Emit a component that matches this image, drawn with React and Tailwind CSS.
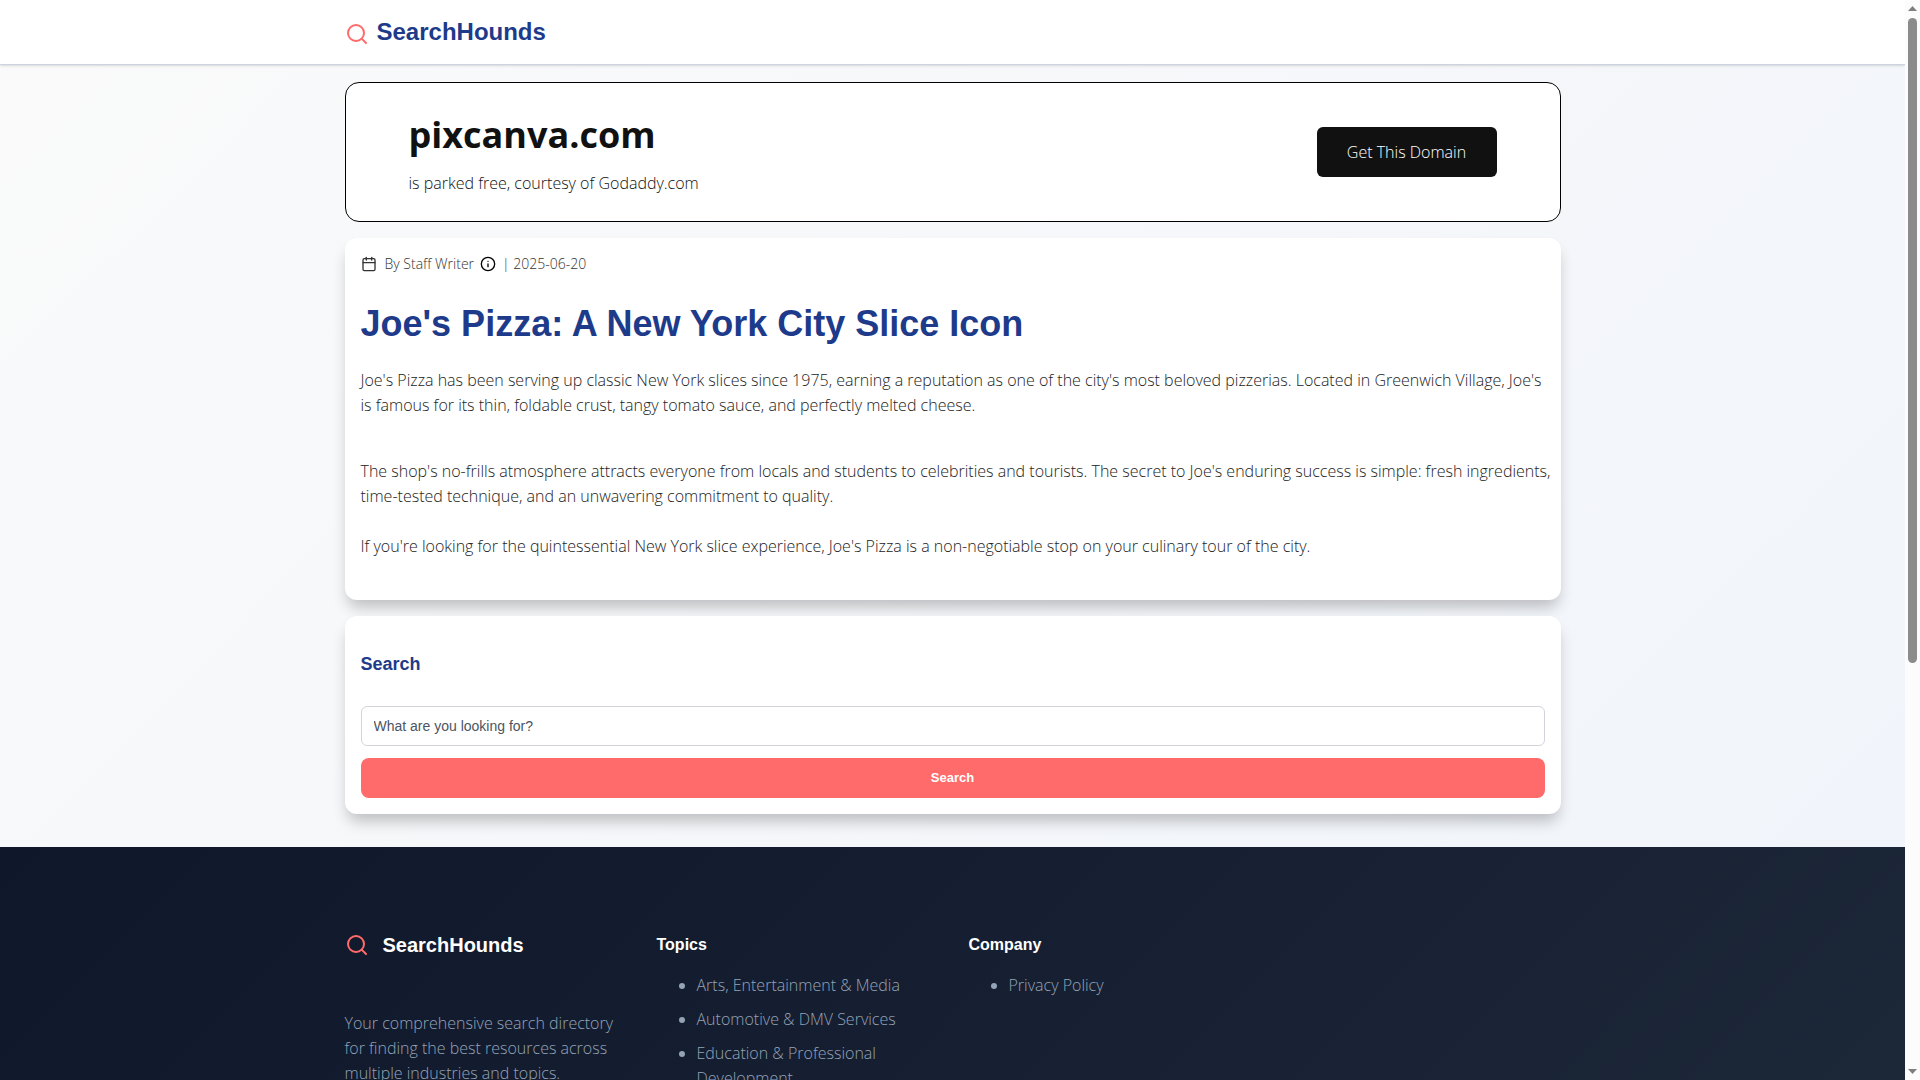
import React from 'react';
import { Calendar, Info, Search } from 'lucide-react';

const topics = [
  'Arts, Entertainment & Media',
  'Automotive & DMV Services',
  'Education & Professional Development',
];

const company = ['Privacy Policy'];

const Header = () => (
  <header className="shrink-0 border-b border-[#cdd3e0] bg-white shadow-sm">
    <div className="mx-auto flex h-16 max-w-[1248px] items-center px-4">
      <a href="#" className="flex items-center gap-2 font-['Liberation_Sans',sans-serif] text-2xl font-bold text-[#1e3a8a]">
        <Search className="mt-1 size-6 text-[#ff6b6b]" strokeWidth={2} />
        SearchHounds
      </a>
    </div>
  </header>
);

const DomainBanner = () => (
  <section className="flex h-[140px] items-center justify-between rounded-[14px] border border-black bg-white px-[63px]">
    <div className="pt-0.5">
      <h2 className="text-4xl leading-[48px] font-bold text-[#111]">pixcanva.com</h2>
      <p className="mt-3 leading-6 text-[#111]">is parked free, courtesy of Godaddy.com</p>
    </div>
    <button type="button" className="h-[50px] w-[180px] rounded-md bg-[#111] text-white">
      Get This Domain
    </button>
  </section>
);

const Article = () => (
  <article className="rounded-xl bg-white p-4 shadow-[0_10px_15px_-3px_rgba(0,0,0,0.24)]">
    <div className="flex h-5 items-center text-sm text-[#333]">
      <Calendar className="mr-2 size-4" strokeWidth={2} />
      <span>By Staff Writer</span>
      <Info className="mx-1.5 size-4 text-black" strokeWidth={2} />
      <span>| 2025-06-20</span>
    </div>
    <h1 className="mt-7 font-['Liberation_Sans',sans-serif] text-4xl leading-[44px] font-bold text-[#1e3a8a]">
      Joe's Pizza: A New York City Slice Icon
    </h1>
    <p className="mt-[22px] leading-[25px]">
      Joe's Pizza has been serving up classic New York slices since 1975, earning a reputation as one of the city's most beloved pizzerias. Located in Greenwich Village, Joe's is famous for its thin, foldable crust, tangy tomato sauce, and perfectly melted cheese.
    </p>
    <p className="-mr-3 mt-[41px] leading-[25px]">
      The shop's no-frills atmosphere attracts everyone from locals and students to celebrities and tourists. The secret to Joe's enduring success is simple: fresh ingredients, time-tested technique, and an unwavering commitment to quality.
    </p>
    <p className="mt-[25px] mb-[25px] leading-[25px]">
      If you're looking for the quintessential New York slice experience, Joe's Pizza is a non-negotiable stop on your culinary tour of the city.
    </p>
  </article>
);

const SearchBox = () => (
  <section className="rounded-xl bg-white p-4 font-['Liberation_Sans',sans-serif] shadow-[0_10px_15px_-3px_rgba(0,0,0,0.24)]">
    <h3 className="mt-4 text-lg leading-8 font-bold text-[#1e3a8a]">Search</h3>
    <form className="mt-[26px] flex flex-col gap-3" onSubmit={(e) => e.preventDefault()}>
      <input
        type="text"
        aria-label="Search"
        placeholder="What are you looking for?"
        className="h-10 rounded-md border border-[#d1d5db] px-3 text-sm font-normal placeholder:text-[#4b5563]"
      />
      <button type="submit" className="h-10 rounded-lg bg-[#ff6b6b] text-[13px] font-bold text-white">
        Search
      </button>
    </form>
  </section>
);

const FooterColumn = ({ title, items }) => (
  <div>
    <h4 className="font-['Liberation_Sans',sans-serif] font-bold text-white">{title}</h4>
    <ul className="mt-4 list-disc space-y-[9px] pl-10 leading-[25px]">
      {items.map((item) => (
        <li key={item}>
          <a href="#">{item}</a>
        </li>
      ))}
    </ul>
  </div>
);

const Footer = () => (
  <footer className="flex-1 bg-linear-135 from-[#0f172a] to-[#1c2738] text-[#94a3b8]">
    <div className="mx-auto grid max-w-[1248px] grid-cols-4 gap-8 px-4 pt-[86px]">
      <div>
        <a href="#" className="flex h-6 items-center gap-3.5 font-['Liberation_Sans',sans-serif] text-xl font-bold text-white">
          <Search className="size-6 text-[#ff6b6b]" strokeWidth={2} />
          SearchHounds
        </a>
        <p className="mt-[54px] leading-[25px]">
          Your comprehensive search directory for finding the best resources across multiple industries and topics.
        </p>
      </div>
      <FooterColumn title="Topics" items={topics} />
      <FooterColumn title="Company" items={company} />
    </div>
  </footer>
);

const ScrollBar = () => (
  <div className="flex w-[15px] shrink-0 flex-col items-center bg-[#fcfcfc] py-[6px]" aria-hidden="true">
    <svg className="h-[5px] w-[9px] shrink-0" viewBox="0 0 9 5" fill="#7f7f7f">
      <path d="M0 5 4.500 0 9 5z" />
    </svg>
    <div className="mt-[7px] mb-[7px] flex-1">
      <div className="h-[61.8%] w-[9px] rounded-full bg-[#8b8b8b]" />
    </div>
    <svg className="h-[5px] w-[9px] shrink-0" viewBox="0 0 9 5" fill="#7f7f7f">
      <path d="M0 0 4.500 5 9 0z" />
    </svg>
  </div>
);

export default function App() {
  return (
    <div className="flex h-screen overflow-hidden font-['Open_Sans',sans-serif] text-base font-light text-[#222]">
      <div className="flex min-w-0 flex-1 flex-col overflow-hidden bg-linear-135 from-[#fafafa] to-[#f0f4fa]">
        <Header />
        <main className="mx-auto w-full max-w-[1248px] shrink-0 space-y-4 px-4 pt-[17px] pb-[33px]">
          <DomainBanner />
          <Article />
          <SearchBox />
        </main>
        <Footer />
      </div>
      <ScrollBar />
    </div>
  );
}
